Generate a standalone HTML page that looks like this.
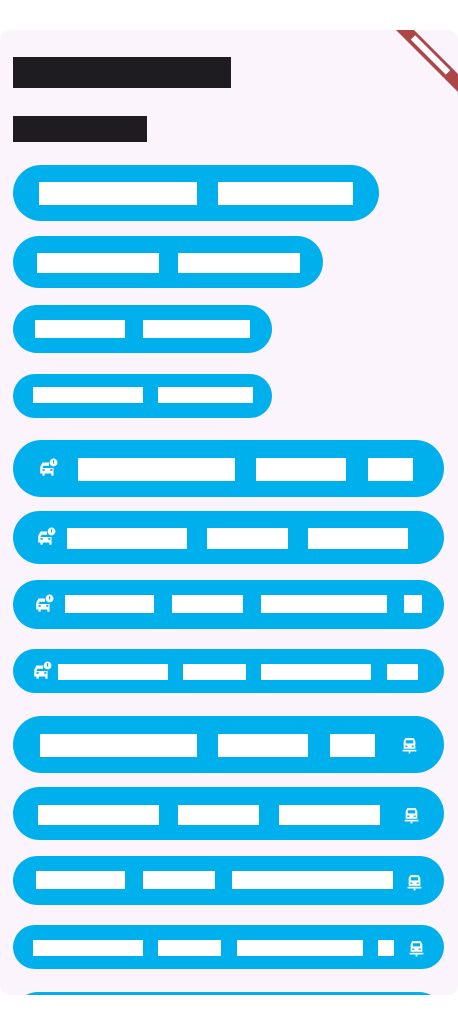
<!DOCTYPE html>
<html><head><meta charset="utf-8"><style>
*{margin:0;padding:0;box-sizing:border-box}
body{width:458px;height:1025px;background:#fff;position:relative;overflow:hidden;font-family:"Liberation Sans",sans-serif}
.card{position:absolute;left:0;top:30px;width:458px;height:965px;background:#fcf4fd;border-radius:10px;overflow:hidden}
.p{position:absolute;background:#00b0ec;border-radius:40px}
.b{position:absolute;background:#fff}
.d{position:absolute;background:#1e1c20}
svg.i{position:absolute}
</style></head><body>
<div class="card"></div>
<div class="d" style="left:13px;top:57px;width:218px;height:31px"></div>
<div class="d" style="left:13px;top:116px;width:134px;height:26px"></div>

<div class="p" style="left:13px;top:165px;width:366px;height:56px"></div>
<div class="b" style="left:39px;top:182px;width:158px;height:23px"></div>
<div class="b" style="left:218px;top:182px;width:135px;height:23px"></div>

<div class="p" style="left:13px;top:236px;width:310px;height:52px"></div>
<div class="b" style="left:37px;top:253px;width:122px;height:20px"></div>
<div class="b" style="left:178px;top:253px;width:122px;height:20px"></div>

<div class="p" style="left:13px;top:305px;width:259px;height:48px"></div>
<div class="b" style="left:35px;top:320px;width:90px;height:18px"></div>
<div class="b" style="left:143px;top:320px;width:107px;height:18px"></div>

<div class="p" style="left:13px;top:374px;width:259px;height:44px"></div>
<div class="b" style="left:33px;top:387px;width:110px;height:16px"></div>
<div class="b" style="left:158px;top:387px;width:95px;height:16px"></div>

<div class="p" style="left:13px;top:440px;width:431px;height:57px"></div>
<div class="b" style="left:78px;top:458px;width:157px;height:23px"></div>
<div class="b" style="left:256px;top:458px;width:90px;height:23px"></div>
<div class="b" style="left:368px;top:458px;width:45px;height:23px"></div>

<div class="p" style="left:13px;top:511px;width:431px;height:53px"></div>
<div class="b" style="left:67px;top:528px;width:120px;height:21px"></div>
<div class="b" style="left:207px;top:528px;width:81px;height:21px"></div>
<div class="b" style="left:308px;top:528px;width:100px;height:21px"></div>

<div class="p" style="left:13px;top:580px;width:431px;height:49px"></div>
<div class="b" style="left:65px;top:595px;width:89px;height:18px"></div>
<div class="b" style="left:172px;top:595px;width:71px;height:18px"></div>
<div class="b" style="left:261px;top:595px;width:126px;height:18px"></div>
<div class="b" style="left:404px;top:595px;width:18px;height:18px"></div>

<div class="p" style="left:13px;top:649px;width:431px;height:44px"></div>
<div class="b" style="left:58px;top:664px;width:110px;height:16px"></div>
<div class="b" style="left:183px;top:664px;width:63px;height:16px"></div>
<div class="b" style="left:261px;top:664px;width:110px;height:16px"></div>
<div class="b" style="left:387px;top:664px;width:31px;height:16px"></div>

<div class="p" style="left:13px;top:716px;width:431px;height:57px"></div>
<div class="b" style="left:40px;top:734px;width:157px;height:23px"></div>
<div class="b" style="left:218px;top:734px;width:90px;height:23px"></div>
<div class="b" style="left:330px;top:734px;width:45px;height:23px"></div>

<div class="p" style="left:13px;top:787px;width:431px;height:53px"></div>
<div class="b" style="left:38px;top:805px;width:121px;height:20px"></div>
<div class="b" style="left:178px;top:805px;width:81px;height:20px"></div>
<div class="b" style="left:279px;top:805px;width:101px;height:20px"></div>

<div class="p" style="left:13px;top:856px;width:431px;height:49px"></div>
<div class="b" style="left:36px;top:871px;width:89px;height:18px"></div>
<div class="b" style="left:143px;top:871px;width:72px;height:18px"></div>
<div class="b" style="left:232px;top:871px;width:161px;height:18px"></div>

<div class="p" style="left:13px;top:925px;width:431px;height:44px"></div>
<div class="b" style="left:33px;top:940px;width:110px;height:16px"></div>
<div class="b" style="left:158px;top:940px;width:63px;height:16px"></div>
<div class="b" style="left:237px;top:940px;width:126px;height:16px"></div>
<div class="b" style="left:378px;top:940px;width:16px;height:16px"></div>

<div style="position:absolute;left:0;top:990px;width:458px;height:5px;overflow:hidden">
<div class="p" style="left:13px;top:2px;width:431px;height:50px"></div></div>

<svg width="0" height="0" style="position:absolute"><defs>
<g id="car"><path d="M2 14V8l2-4h6v3H5l-1 2h10v5H2z M4 14v2h2v-2 M12 14v2h2v-2" fill="#fff"/><rect x="4" y="10" width="2" height="1.5" fill="#00b0ec"/><rect x="11" y="10" width="2" height="1.5" fill="#00b0ec"/><circle cx="14" cy="4" r="3.5" fill="#fff"/><rect x="13.5" y="2" width="1" height="3" fill="#00b0ec"/></g>
<g id="tr"><path d="M4 2h8l1.5 3v7H2.5V5z" fill="#fff"/><rect x="4.5" y="4" width="7" height="3" fill="#00b0ec"/><rect x="4" y="9" width="2" height="1.3" fill="#00b0ec"/><rect x="10" y="9" width="2" height="1.3" fill="#00b0ec"/><rect x="1.5" y="13" width="13" height="1.6" fill="#fff"/><rect x="7.2" y="14" width="1.6" height="2.5" fill="#fff"/></g>
</defs></svg>
<svg class="i" style="left:38px;top:458px" width="20" height="20" viewBox="0 0 18 18"><use href="#car"/></svg>
<svg class="i" style="left:36px;top:527px" width="20" height="20" viewBox="0 0 18 18"><use href="#car"/></svg>
<svg class="i" style="left:34px;top:594px" width="20" height="20" viewBox="0 0 18 18"><use href="#car"/></svg>
<svg class="i" style="left:32px;top:661px" width="20" height="20" viewBox="0 0 18 18"><use href="#car"/></svg>
<svg class="i" style="left:401px;top:736px" width="17" height="18" viewBox="0 0 16 17"><use href="#tr"/></svg>
<svg class="i" style="left:403px;top:806px" width="17" height="18" viewBox="0 0 16 17"><use href="#tr"/></svg>
<svg class="i" style="left:406px;top:873px" width="17" height="18" viewBox="0 0 16 17"><use href="#tr"/></svg>
<svg class="i" style="left:408px;top:939px" width="17" height="18" viewBox="0 0 16 17"><use href="#tr"/></svg>

<svg class="i" style="left:380px;top:25px" width="78" height="75" viewBox="380 25 78 75">
<polygon points="396,30 414,30 458,74 458,92" fill="#ad4747"/>
<polygon points="415.2,35.2 450.2,70.2 445.8,74.6 410.8,39.6" fill="#fff"/>
</svg>
</body></html>
